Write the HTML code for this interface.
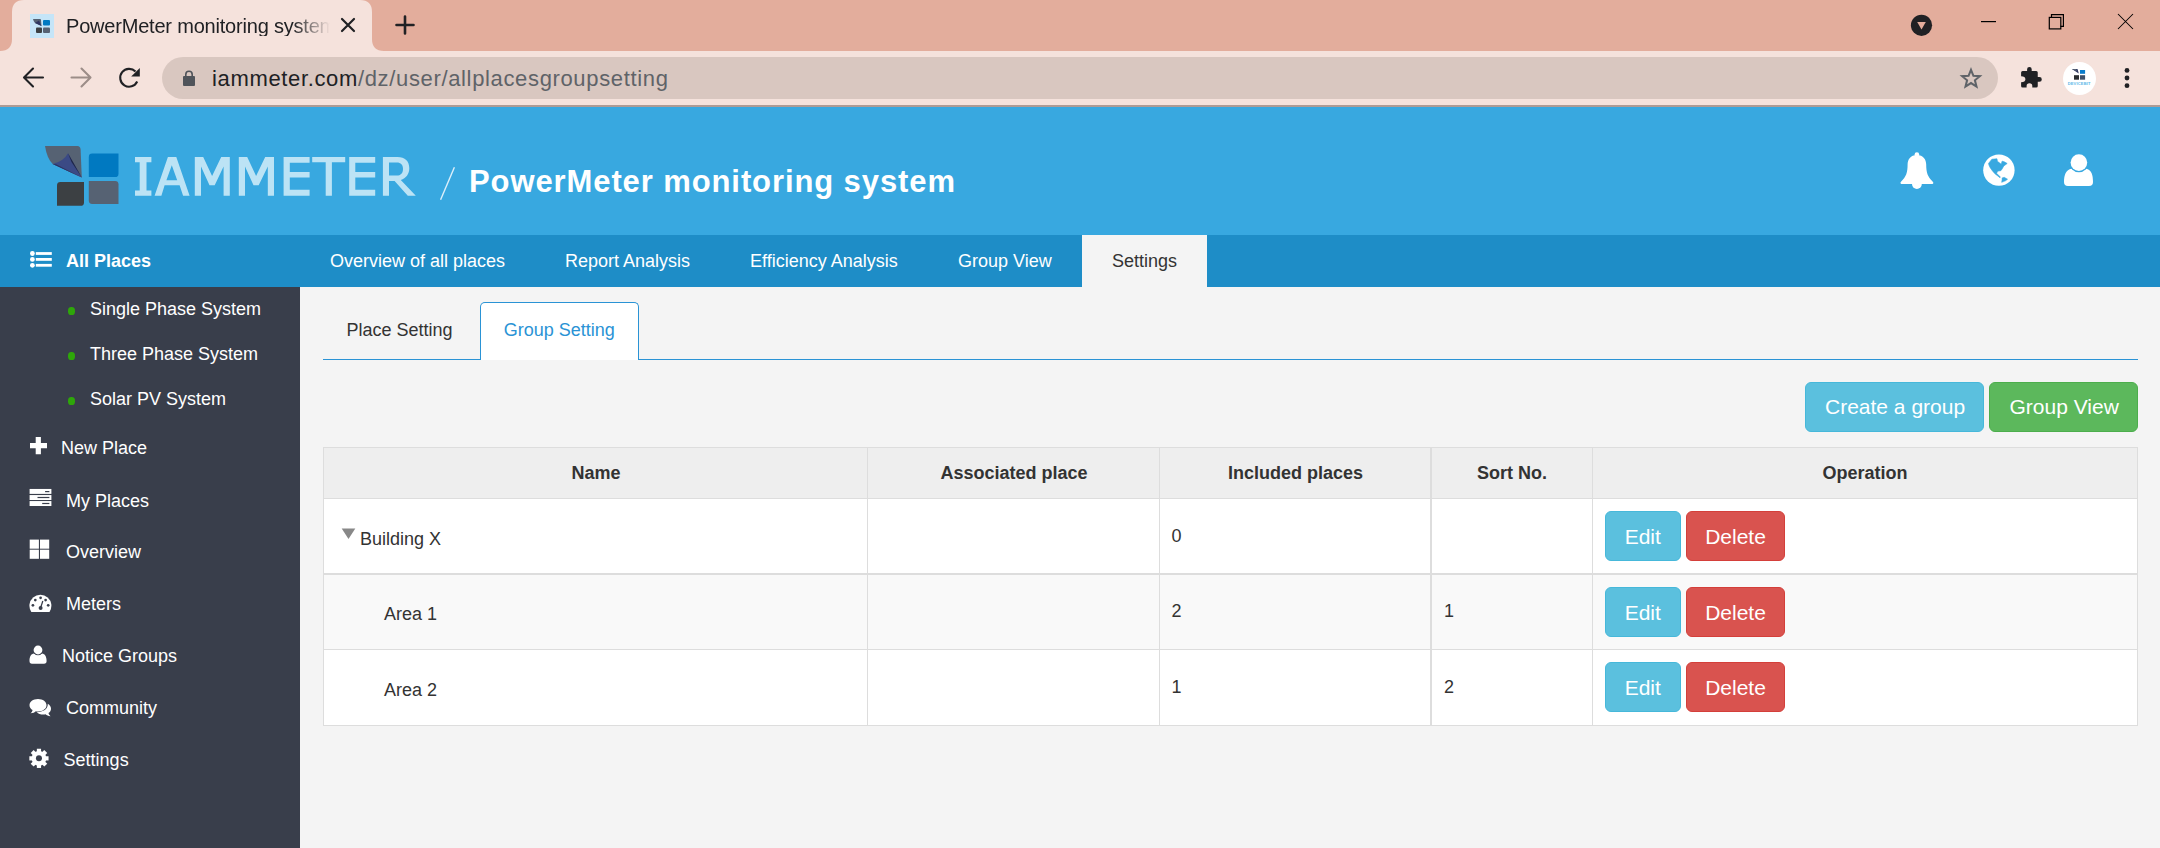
<!DOCTYPE html>
<html><head><meta charset="utf-8">
<style>
*{box-sizing:border-box;margin:0;padding:0}
html,body{width:2160px;height:848px;overflow:hidden;background:#F4F4F4;font-family:"Liberation Sans",sans-serif;position:relative}
.a{position:absolute}
.t{position:absolute;white-space:nowrap;line-height:1}
</style></head><body>

<!-- ===== Browser chrome ===== -->
<div class="a" style="left:0;top:0;width:2160px;height:51px;background:#E3AD9C"></div>
<svg class="a" style="left:0;top:0" width="400" height="52" viewBox="0 0 400 52">
  <path d="M0,51 Q12,51 12,39 V12 Q12,0 24,0 H360 Q372,0 372,12 V39 Q372,51 384,51 Z" fill="#F5E2DC"/>
</svg>
<div class="a" style="left:0;top:51px;width:2160px;height:54px;background:#F5E2DC"></div>
<div class="a" style="left:0;top:105px;width:2160px;height:2px;background:#AE9B95"></div>

<!-- favicon -->
<div class="a" style="left:30px;top:14px;width:24px;height:24px;background:#C5E5F8"></div>
<svg class="a" style="left:30px;top:14px" width="24" height="24" viewBox="0 0 24 24">
  <path d="M3,5 H10 Q11,5 11,6 L11.5,12 L5,9 Q3.5,7.5 3,5Z" fill="#566273"/>
  <path d="M5,9 L11.5,12 L9,6.5 Z" fill="#2D3561"/>
  <rect x="13" y="6" width="7" height="5.5" rx="1" fill="#0079C1"/>
  <rect x="6" y="13.5" width="6" height="5.5" rx="1" fill="#3C4043"/>
  <rect x="13" y="13.5" width="7" height="5.5" rx="1" fill="#566273"/>
</svg>
<div class="t" style="left:66px;top:16px;font-size:20px;letter-spacing:-0.2px;color:#202124;width:264px;overflow:hidden;-webkit-mask-image:linear-gradient(to right,#000 86%,transparent 100%)">PowerMeter monitoring system</div>
<svg class="a" style="left:340px;top:17px" width="16" height="16" viewBox="0 0 16 16">
  <path d="M2,2 L14,14 M14,2 L2,14" stroke="#202124" stroke-width="2.2" stroke-linecap="round"/>
</svg>
<svg class="a" style="left:394px;top:14px" width="22" height="22" viewBox="0 0 22 22">
  <path d="M11,2.5 V19.5 M2.5,11 H19.5" stroke="#202124" stroke-width="2.6" stroke-linecap="round"/>
</svg>

<!-- window controls -->
<svg class="a" style="left:1900px;top:4px" width="260" height="44" viewBox="1900 4 260 44">
  <circle cx="1921.5" cy="25.3" r="10.6" fill="#202124"/>
  <path d="M1917.2,22 H1925.8 L1921.5,29.5 Z" fill="#E3AD9C"/>
  <rect x="1981" y="21" width="15" height="1.2" fill="#000"/>
  <path d="M2051.5,17.5 V14.6 H2063.4 V26.4 H2060.5" fill="none" stroke="#000" stroke-width="1.2"/>
  <rect x="2049.3" y="17.4" width="11.5" height="11.5" fill="none" stroke="#000" stroke-width="1.2"/>
  <path d="M2118,14 L2133,29 M2133,14 L2118,29" stroke="#000" stroke-width="1.05"/>
</svg>

<!-- nav buttons -->
<svg class="a" style="left:0;top:51px" width="160" height="54" viewBox="0 51 160 54">
  <path d="M43,77.5 H24.5 M33,68.5 L24,77.5 L33,86.5" fill="none" stroke="#202124" stroke-width="2.1" stroke-linecap="round" stroke-linejoin="round"/>
  <path d="M71.5,77.5 H90 M81.5,68.5 L90.5,77.5 L81.5,86.5" fill="none" stroke="#9C8D88" stroke-width="2.1" stroke-linecap="round" stroke-linejoin="round"/>
  <path d="M137.2,81.5 A8.9,8.9 0 1 1 135.5,71.6" fill="none" stroke="#202124" stroke-width="2.1"/>
  <path d="M139.8,67.9 V76.6 H131.2 Z" fill="#202124"/>
</svg>

<!-- omnibox -->
<div class="a" style="left:162px;top:57px;width:1836px;height:42px;border-radius:21px;background:#D9C7C0"></div>
<svg class="a" style="left:180px;top:68px" width="20" height="20" viewBox="180 68 20 20">
  <path d="M185.8,77 V74.4 A3.2,3.2 0 0 1 192.2,74.4 V77" fill="none" stroke="#50545A" stroke-width="1.6"/>
  <rect x="183" y="76.1" width="12" height="9.8" rx="1" fill="#50545A"/>
</svg>
<div class="t" style="left:212px;top:68px;font-size:22px;letter-spacing:0.65px;color:#5F6368"><span style="color:#202124">iammeter.com</span>/dz/user/allplacesgroupsetting</div>
<svg class="a" style="left:1958px;top:65px" width="26" height="26" viewBox="0 0 26 26">
  <path transform="translate(13,13.6) scale(0.93) translate(-13,-13)" d="M13,3.5 L15.6,10 L22.5,10.4 L17.2,14.8 L18.9,21.6 L13,17.8 L7.1,21.6 L8.8,14.8 L3.5,10.4 L10.4,10 Z" fill="none" stroke="#5F6368" stroke-width="2.2" stroke-linejoin="miter"/>
</svg>
<svg class="a" style="left:2016px;top:62px" width="30" height="30" viewBox="0 0 30 30">
  <path d="M6.6,9 H11.1 V7.3 A2.3,2.3 0 0 1 15.7,7.3 V9 H20.25 Q21.75,9 21.75,10.5 V15 H23.4 A2.4,2.4 0 0 1 23.4,19.8 H21.75 V24.1 Q21.75,25.6 20.25,25.6 H16.3 V24 A2.85,2.85 0 0 0 10.6,24 V25.6 H6.6 Q5.1,25.6 5.1,24.1 V20.3 A4.3,3 0 0 0 5.1,14.3 V10.5 Q5.1,9 6.6,9 Z" fill="#202124"/>
</svg>
<div class="a" style="left:2063px;top:62px;width:33px;height:33px;border-radius:50%;background:#fff"></div>
<svg class="a" style="left:2063px;top:62px" width="33" height="33" viewBox="0 0 33 33">
  <path d="M8.9,7 H14.5 L15.8,11.6 Z" fill="#2D3561"/>
  <path d="M8.9,7 H13 L14.2,9.5 Z" fill="#566273"/>
  <rect x="17" y="8" width="5.1" height="3.8" fill="#0A7CCB"/>
  <rect x="11" y="13.2" width="5" height="4.5" fill="#2A2D30"/>
  <rect x="17" y="13.2" width="5.1" height="4.5" fill="#3F5068"/>
  <text x="16.2" y="23" font-size="4" font-weight="bold" text-anchor="middle" fill="#5CB8E8" font-family="Liberation Sans" letter-spacing="0.2">DEVICEBIT</text>
</svg>
<svg class="a" style="left:2120px;top:66px" width="14" height="24" viewBox="0 0 14 24">
  <circle cx="7" cy="4.4" r="2.4" fill="#202124"/>
  <circle cx="7" cy="12" r="2.4" fill="#202124"/>
  <circle cx="7" cy="19.7" r="2.4" fill="#202124"/>
</svg>

<!-- ===== App header ===== -->
<div class="a" style="left:0;top:107px;width:2160px;height:128px;background:#38A8E0"></div>
<div class="a" style="left:0;top:235px;width:2160px;height:52px;background:#1E8DC7"></div>


<!-- logo -->
<svg class="a" style="left:0;top:107px" width="1000" height="128" viewBox="0 107 1000 128">
  <path d="M45,146 H77.4 Q80.4,146 80.6,149.5 L81.8,177.6 L52.7,164 Q47,158.5 45,146 Z" fill="#566273"/>
  <path d="M68,153.2 Q64,161 52.7,164 L81.8,177.6 Z" fill="#3B4A85"/>
  <path d="M68,153.2 L81.8,177.6 L71.5,162 Z" fill="#1F2545"/><path d="M52.7,164 L81.8,177.6 L56,164.2 Z" fill="#2A3260"/>
  <path d="M92.2,153.6 H118.5 V173.7 Q118.5,177.1 115.1,177.1 H88.8 V157 Q88.8,153.6 92.2,153.6 Z" fill="#0079C1"/>
  <path d="M60.4,182 H84 V202.4 Q84,205.8 80.6,205.8 H57 V185.4 Q57,182 60.4,182 Z" fill="#3C4043"/>
  <path d="M88.8,180.9 H115.1 Q118.5,180.9 118.5,184.3 V204 H92.2 Q88.8,204 88.8,200.6 Z" fill="#566273"/>
  <g fill="#BCE3F5">
   <path d="M135,157 H151.4 V162.3 H146.5 V190.6 H151.4 V195.7 H135 V190.6 H139.7 V162.3 H135 Z"/>
   <path fill-rule="evenodd" d="M154.6,195.7 L167.9,157 H176.3 L189.6,195.7 H183.1 L179.6,185.3 H164.6 L161.4,195.7 Z M171.8,165.2 L166.4,180.2 H177.2 Z"/>
   <path d="M194.8,195.7 V157 H203.2 L212.1,176 L221.2,157 H229.8 V195.7 H223.6 V166.5 L214.7,185.3 H209.5 L201,166.5 V195.7 Z"/>
   <path d="M238.8,195.7 V157 H247.2 L256.1,176 L265.2,157 H274 V195.7 H267.8 V166.5 L258.7,185.3 H253.5 L245,166.5 V195.7 Z"/>
   <path d="M283.6,157 H309.6 V162.7 H289.8 V172 H309.6 V177.4 H289.8 V189.8 H309.6 V195.7 H283.6 Z"/>
   <path d="M312.2,157 H345.2 V162.3 H331.9 V195.7 H325.7 V162.3 H312.2 Z"/>
   <path d="M349.2,157 H375.2 V162.7 H355.3 V172 H375.2 V177.4 H355.3 V189.8 H375.2 V195.7 H349.2 Z"/>
   <path fill-rule="evenodd" d="M382.9,195.7 V157 H397.5 C405,157 409.3,161.2 409.3,168.3 C409.3,174.2 406,178.4 400.8,179.9 L415.8,195.7 H407.8 L394.6,180.9 H389 V195.7 Z M389,162.4 V175.6 H396.8 C400.8,175.6 403,173.2 403,169 C403,164.7 400.8,162.4 396.8,162.4 Z"/>
  </g>
  <path d="M454.4,167.3 L440.6,199.8" stroke="#DCEFFA" stroke-width="1.4"/>
</svg>
<div class="t" style="left:469px;top:166px;font-size:31px;font-weight:bold;letter-spacing:0.9px;color:#fff">PowerMeter monitoring system</div>

<!-- header icons -->
<svg class="a" style="left:1899px;top:151.7px" width="36" height="38" viewBox="0 0 36 38">
  <circle cx="17.9" cy="2.6" r="2.3" fill="#fff"/>
  <path d="M17.9,3 C11.5,3 8.6,7.5 8.6,12.5 C8.6,20.5 7.3,24.5 2,29.8 Q0.5,31.3 2.2,32 H33.6 Q35.3,31.3 33.8,29.8 C28.5,24.5 27.2,20.5 27.2,12.5 C27.2,7.5 24.3,3 17.9,3 Z" fill="#fff"/>
  <path d="M13,32 A4.9,4.9 0 0 0 22.8,32 Z" fill="#fff"/>
</svg>
<svg class="a" style="left:1983px;top:154px" width="32" height="32" viewBox="0 0 32 32">
  <circle cx="15.9" cy="16.15" r="15.7" fill="#fff"/>
  <path d="M5.49,9.46 L8.89,5.22 L13.98,4.79 L14.41,7.34 L16.11,8.62 L18.23,10.31 L19.08,7.13 L21.2,7.77 L24.18,9.46 L22.48,10.74 L20.78,12.01 L19.08,14.99 L17.81,16.68 L14.83,17.11 L13.56,19.23 L15.26,20.93 L17.38,23.05 L16.96,23.69 L14.83,21.99 L11.86,19.66 L9.31,16.68 L7.19,13.71 L6.13,11.59 Z" fill="#38A8E0" stroke="#38A8E0" stroke-width="0.6" stroke-linejoin="round"/>
  <path d="M19.08,23.9 L21.2,23.27 L24.6,25.18 L22.48,26.87 L18.66,28.36 L19.08,25.6 Z" fill="#38A8E0" stroke="#38A8E0" stroke-width="0.5" stroke-linejoin="round"/>
</svg>
<svg class="a" style="left:2063px;top:154px" width="31" height="33" viewBox="0 0 31 33">
  <path d="M1,28 C1,21 3,15.5 8.5,14.8 Q15.8,19 23,14.8 C28.5,15.5 30,21 30,28 Q30,32 26,32 H5 Q1,32 1,28 Z" fill="#fff"/>
  <circle cx="15.9" cy="8.6" r="9.6" fill="#38A8E0"/>
  <circle cx="15.9" cy="8.6" r="8.3" fill="#fff"/>
</svg>

<!-- nav bar -->
<svg class="a" style="left:29px;top:250px" width="24" height="20" viewBox="0 0 24 20">
  <circle cx="3.4" cy="3.5" r="2.4" fill="#fff"/>
  <circle cx="3.4" cy="9.4" r="2.4" fill="#fff"/>
  <circle cx="3.4" cy="15.3" r="2.4" fill="#fff"/>
  <rect x="6.8" y="2.1" width="16" height="2.8" fill="#fff"/>
  <rect x="6.8" y="8" width="16" height="2.8" fill="#fff"/>
  <rect x="6.8" y="13.9" width="16" height="2.8" fill="#fff"/>
</svg>
<div class="t" style="left:66px;top:251.6px;font-size:18px;font-weight:bold;color:#fff">All Places</div>
<div class="t" style="left:330px;top:251.6px;font-size:18px;color:#fff">Overview of all places</div>
<div class="t" style="left:565px;top:251.6px;font-size:18px;color:#fff">Report Analysis</div>
<div class="t" style="left:750px;top:251.6px;font-size:18px;color:#fff">Efficiency Analysis</div>
<div class="t" style="left:958px;top:251.6px;font-size:18px;color:#fff">Group View</div>
<div class="a" style="left:1082px;top:235px;width:125px;height:52px;background:#F4F4F4"></div>
<div class="t" style="left:1112px;top:251.6px;font-size:18px;color:#333">Settings</div>

<!-- sidebar -->
<div class="a" style="left:0;top:287px;width:300px;height:561px;background:#393E4B"></div>
<div class="a" style="left:68px;top:307px;width:7px;height:8px;border-radius:45%;background:#2EA60A"></div>
<div class="a" style="left:68px;top:352px;width:7px;height:8px;border-radius:45%;background:#2EA60A"></div>
<div class="a" style="left:68px;top:397px;width:7px;height:8px;border-radius:45%;background:#2EA60A"></div>
<div class="t" style="left:90px;top:300.3px;font-size:18px;color:#fff">Single Phase System</div>
<div class="t" style="left:90px;top:345.2px;font-size:18px;color:#fff">Three Phase System</div>
<div class="t" style="left:90px;top:390.1px;font-size:18px;color:#fff">Solar PV System</div>

<svg class="a" style="left:29px;top:436px" width="20" height="20" viewBox="0 0 20 20">
  <path d="M9.3,1 V18.2 M1,9.6 H18" stroke="#fff" stroke-width="5.2"/>
</svg>
<div class="t" style="left:61px;top:439px;font-size:18px;color:#fff">New Place</div>

<svg class="a" style="left:29px;top:488px" width="24" height="20" viewBox="0 0 24 20">
  <rect x="0.6" y="0.95" width="21.8" height="4.95" fill="#fff"/>
  <rect x="0.6" y="7.06" width="21.8" height="4.95" fill="#fff"/>
  <rect x="0.6" y="13.05" width="21.8" height="4.95" fill="#fff"/>
  <rect x="16.1" y="3.0" width="4.3" height="1.2" fill="#393E4B"/>
  <rect x="8.5" y="8.9" width="11.9" height="1.2" fill="#393E4B"/>
  <rect x="13.2" y="14.9" width="7.2" height="1.2" fill="#393E4B"/>
</svg>
<div class="t" style="left:66px;top:491.7px;font-size:18px;color:#fff">My Places</div>

<svg class="a" style="left:29px;top:539px" width="22" height="21" viewBox="0 0 22 21">
  <rect x="0.7" y="0.6" width="9.2" height="9.1" fill="#fff"/>
  <rect x="11" y="0.6" width="9.2" height="9.1" fill="#fff"/>
  <rect x="0.7" y="10.7" width="9.2" height="9.1" fill="#fff"/>
  <rect x="11" y="10.7" width="9.2" height="9.1" fill="#fff"/>
</svg>
<div class="t" style="left:66px;top:542.9px;font-size:18px;color:#fff">Overview</div>

<svg class="a" style="left:29px;top:594px" width="23" height="19" viewBox="0 0 23 19">
  <path d="M2.3,17.9 A11,11 0 1 1 20.5,17.9 Z" fill="#fff"/>
  <g fill="#393E4B">
  <circle cx="11.6" cy="3.8" r="1.35"/><circle cx="6.3" cy="6.1" r="1.35"/><circle cx="16.6" cy="6.1" r="1.35"/>
  <circle cx="3.9" cy="11.3" r="1.35"/><circle cx="19.2" cy="11.3" r="1.35"/>
  <circle cx="11.6" cy="13.9" r="2"/>
  </g>
  <path d="M11.6,13.9 L13.8,7" stroke="#393E4B" stroke-width="1.3"/>
</svg>
<div class="t" style="left:66px;top:594.7px;font-size:18px;color:#fff">Meters</div>

<svg class="a" style="left:29px;top:645px" width="19" height="20" viewBox="0 0 19 20">
  <path d="M0.5,16 C0.5,11.5 2,9 5,8.6 Q9,11 13,8.6 C16,9 17.6,11.5 17.6,16 Q17.6,18.7 15,18.7 H3 Q0.5,18.7 0.5,16 Z" fill="#fff"/>
  <circle cx="9" cy="5" r="5.2" fill="#393E4B"/>
  <circle cx="9" cy="5" r="4.4" fill="#fff"/>
</svg>
<div class="t" style="left:62px;top:646.8px;font-size:18px;color:#fff">Notice Groups</div>

<svg class="a" style="left:29px;top:698px" width="23" height="20" viewBox="0 0 23 20">
  <path d="M9,1 C4,1 0.5,3.8 0.5,7.2 C0.5,9.3 1.8,11 3.6,12 C3.3,13.5 2.4,14.6 1.5,15.3 C4,15.2 5.8,14.2 6.8,13.2 C7.5,13.3 8.2,13.4 9,13.4 C14,13.4 17.5,10.6 17.5,7.2 C17.5,3.8 14,1 9,1 Z" fill="#fff"/>
  <path d="M18.8,5.8 C20.8,7 22,8.8 22,10.8 C22,12.6 21.1,14 19.5,15 C19.8,16.3 20.6,17.4 21.6,18.2 C19.3,18.1 17.6,17.2 16.6,16.2 C15.9,16.4 15.1,16.5 14.3,16.5 C11.6,16.5 9.2,15.6 7.8,14.2 C14,14.2 19.2,11 18.8,5.8 Z" fill="#fff"/>
</svg>
<div class="t" style="left:66px;top:699.2px;font-size:18px;color:#fff">Community</div>

<svg class="a" style="left:29px;top:748px" width="20" height="21" viewBox="0 0 20 21">
  <g transform="translate(9.95,10.35)" fill="#fff">
   <circle r="7.4"/><rect x="-2.1" y="-9.6" width="4.2" height="19.2" transform="rotate(0)"/><rect x="-2.1" y="-9.6" width="4.2" height="19.2" transform="rotate(45)"/><rect x="-2.1" y="-9.6" width="4.2" height="19.2" transform="rotate(90)"/><rect x="-2.1" y="-9.6" width="4.2" height="19.2" transform="rotate(135)"/>
   <circle r="3" fill="#393E4B"/>
  </g>
</svg>
<div class="t" style="left:63.6px;top:751px;font-size:18px;color:#fff">Settings</div>

<!-- ===== Content ===== -->
<div class="a" style="left:323px;top:358.5px;width:1815px;height:1.3px;background:#2A93D5"></div>
<div class="t" style="left:346.4px;top:320.9px;font-size:18px;color:#333">Place Setting</div>
<div class="a" style="left:480px;top:302px;width:159px;height:58px;border:1.5px solid #2A93D5;border-bottom:none;border-radius:5px 5px 0 0;background:#fff"></div>
<div class="t" style="left:503.8px;top:320.9px;font-size:18px;color:#2A93D5">Group Setting</div>

<div class="a" style="left:1805px;top:382px;width:179px;height:50px;border-radius:6px;background:#5BC0DE;border:1.5px solid #46B8DA"></div>
<div class="t" style="left:1825px;top:396.3px;font-size:21px;color:#fff">Create a group</div>
<div class="a" style="left:1989px;top:382px;width:149px;height:50px;border-radius:6px;background:#5CB85C;border:1.5px solid #4CAE4C"></div>
<div class="t" style="left:2009.5px;top:396.3px;font-size:21px;color:#fff">Group View</div>

<!-- table -->
<div class="a" style="left:323px;top:447px;width:1815px;height:279px;background:#fff"></div>
<div class="a" style="left:323px;top:447px;width:1815px;height:51.5px;background:#EEE"></div>
<div class="a" style="left:323px;top:574px;width:1815px;height:75.5px;background:#F9F9F9"></div>
<div class="a" style="left:323px;top:498px;width:1815px;height:1.2px;background:#DDD"></div>
<div class="a" style="left:323px;top:573px;width:1815px;height:1.8px;background:#DDD"></div>
<div class="a" style="left:323px;top:649px;width:1815px;height:1.3px;background:#DDD"></div>
<div class="a" style="left:867px;top:447px;width:1.3px;height:279px;background:#DDD"></div>
<div class="a" style="left:1159px;top:447px;width:1.3px;height:279px;background:#DDD"></div>
<div class="a" style="left:1430px;top:447px;width:1.5px;height:279px;background:#DDD"></div>
<div class="a" style="left:1592px;top:447px;width:1.2px;height:279px;background:#DDD"></div>
<div class="a" style="left:323px;top:447px;width:1815px;height:279px;border:solid #DDD;border-width:1.6px 1.8px 1.8px 1.2px"></div>

<div class="t" style="left:324px;width:544px;text-align:center;top:463.9px;font-size:18px;font-weight:bold;color:#333">Name</div>
<div class="t" style="left:868px;width:292px;text-align:center;top:463.9px;font-size:18px;font-weight:bold;color:#333">Associated place</div>
<div class="t" style="left:1160px;width:271px;text-align:center;top:463.9px;font-size:18px;font-weight:bold;color:#333">Included places</div>
<div class="t" style="left:1431px;width:162px;text-align:center;top:463.9px;font-size:18px;font-weight:bold;color:#333">Sort No.</div>
<div class="t" style="left:1593px;width:544px;text-align:center;top:463.9px;font-size:18px;font-weight:bold;color:#333">Operation</div>

<svg class="a" style="left:341px;top:528px" width="15" height="12" viewBox="0 0 15 12"><path d="M0.7,0.5 H14.3 L7.5,11.1 Z" fill="#888"/></svg>
<div class="t" style="left:360px;top:529.9px;font-size:18px;color:#333">Building X</div>
<div class="t" style="left:1171.5px;top:526.9px;font-size:18px;color:#333">0</div>

<div class="t" style="left:384px;top:604.6px;font-size:18px;color:#333">Area 1</div>
<div class="t" style="left:1171.5px;top:602.3px;font-size:18px;color:#333">2</div>
<div class="t" style="left:1444px;top:602.3px;font-size:18px;color:#333">1</div>

<div class="t" style="left:384px;top:680.9px;font-size:18px;color:#333">Area 2</div>
<div class="t" style="left:1171.5px;top:677.7px;font-size:18px;color:#333">1</div>
<div class="t" style="left:1444px;top:677.7px;font-size:18px;color:#333">2</div>
<div class="a" style="left:1605px;top:511px;width:75.5px;height:50px;border-radius:6px;background:#5BC0DE;border:1.5px solid #46B8DA"></div>
<div class="t" style="left:1605px;width:75.5px;text-align:center;top:525.6px;font-size:21px;color:#fff">Edit</div>
<div class="a" style="left:1686px;top:511px;width:99px;height:50px;border-radius:6px;background:#D9534F;border:1.5px solid #D43F3A"></div>
<div class="t" style="left:1686px;width:99px;text-align:center;top:525.6px;font-size:21px;color:#fff">Delete</div>
<div class="a" style="left:1605px;top:587px;width:75.5px;height:50px;border-radius:6px;background:#5BC0DE;border:1.5px solid #46B8DA"></div>
<div class="t" style="left:1605px;width:75.5px;text-align:center;top:601.6px;font-size:21px;color:#fff">Edit</div>
<div class="a" style="left:1686px;top:587px;width:99px;height:50px;border-radius:6px;background:#D9534F;border:1.5px solid #D43F3A"></div>
<div class="t" style="left:1686px;width:99px;text-align:center;top:601.6px;font-size:21px;color:#fff">Delete</div>
<div class="a" style="left:1605px;top:662px;width:75.5px;height:50px;border-radius:6px;background:#5BC0DE;border:1.5px solid #46B8DA"></div>
<div class="t" style="left:1605px;width:75.5px;text-align:center;top:676.6px;font-size:21px;color:#fff">Edit</div>
<div class="a" style="left:1686px;top:662px;width:99px;height:50px;border-radius:6px;background:#D9534F;border:1.5px solid #D43F3A"></div>
<div class="t" style="left:1686px;width:99px;text-align:center;top:676.6px;font-size:21px;color:#fff">Delete</div>

</body></html>
